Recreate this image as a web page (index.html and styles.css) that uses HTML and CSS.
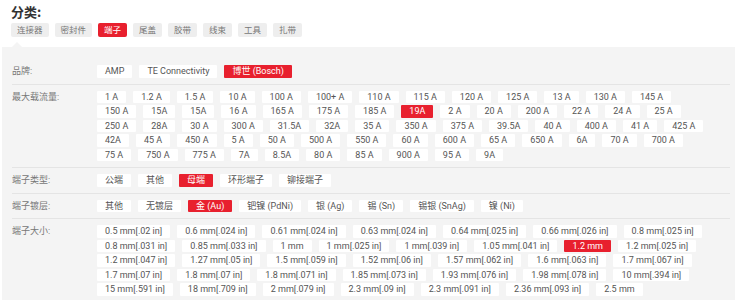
FILE: index.html
```html
<!DOCTYPE html>
<html>
<head>
    <meta charset="UTF-8">
    <title>分类筛选</title>
    <link rel="stylesheet" href="styles.css">
</head>
<body>
    <div class="filter">
        <h2 class="filter-title">分类:</h2>
        <div class="tabs">
            <span class="tab">连接器</span>
            <span class="tab">密封件</span>
            <span class="tab active">端子</span>
            <span class="tab">尾盖</span>
            <span class="tab">胶带</span>
            <span class="tab">线束</span>
            <span class="tab">工具</span>
            <span class="tab">扎带</span>
        </div>

        <div class="panel">
            <div class="row">
                <div class="label">品牌:</div>
                <div class="options">
                    <span class="opt">AMP</span>
                    <span class="opt">TE Connectivity</span>
                    <span class="opt active">博世 (Bosch)</span>
                </div>
            </div>

            <div class="row">
                <div class="label">最大载流量:</div>
                <div class="options">
                    <span class="opt">1 A</span>
                    <span class="opt">1.2 A</span>
                    <span class="opt">1.5 A</span>
                    <span class="opt">10 A</span>
                    <span class="opt">100 A</span>
                    <span class="opt">100+ A</span>
                    <span class="opt">110 A</span>
                    <span class="opt">115 A</span>
                    <span class="opt">120 A</span>
                    <span class="opt">125 A</span>
                    <span class="opt">13 A</span>
                    <span class="opt">130 A</span>
                    <span class="opt">145 A</span>
                    <span class="opt">150 A</span>
                    <span class="opt">15A</span>
                    <span class="opt">15A</span>
                    <span class="opt">16 A</span>
                    <span class="opt">165 A</span>
                    <span class="opt">175 A</span>
                    <span class="opt">185 A</span>
                    <span class="opt active">19A</span>
                    <span class="opt">2 A</span>
                    <span class="opt">20 A</span>
                    <span class="opt">200 A</span>
                    <span class="opt">22 A</span>
                    <span class="opt">24 A</span>
                    <span class="opt">25 A</span>
                    <span class="opt">250 A</span>
                    <span class="opt">28A</span>
                    <span class="opt">30 A</span>
                    <span class="opt">300 A</span>
                    <span class="opt">31.5A</span>
                    <span class="opt">32A</span>
                    <span class="opt">35 A</span>
                    <span class="opt">350 A</span>
                    <span class="opt">375 A</span>
                    <span class="opt">39.5A</span>
                    <span class="opt">40 A</span>
                    <span class="opt">400 A</span>
                    <span class="opt">41 A</span>
                    <span class="opt">425 A</span>
                    <span class="opt">42A</span>
                    <span class="opt">45 A</span>
                    <span class="opt">450 A</span>
                    <span class="opt">5 A</span>
                    <span class="opt">50 A</span>
                    <span class="opt">500 A</span>
                    <span class="opt">550 A</span>
                    <span class="opt">60 A</span>
                    <span class="opt">600 A</span>
                    <span class="opt">65 A</span>
                    <span class="opt">650 A</span>
                    <span class="opt">6A</span>
                    <span class="opt">70 A</span>
                    <span class="opt">700 A</span>
                    <span class="opt">75 A</span>
                    <span class="opt">750 A</span>
                    <span class="opt">775 A</span>
                    <span class="opt">7A</span>
                    <span class="opt">8.5A</span>
                    <span class="opt">80 A</span>
                    <span class="opt">85 A</span>
                    <span class="opt">900 A</span>
                    <span class="opt">95 A</span>
                    <span class="opt">9A</span>
                </div>
            </div>

            <div class="row">
                <div class="label">端子类型:</div>
                <div class="options">
                    <span class="opt">公端</span>
                    <span class="opt">其他</span>
                    <span class="opt active">母端</span>
                    <span class="opt">环形端子</span>
                    <span class="opt">铆接端子</span>
                </div>
            </div>

            <div class="row">
                <div class="label">端子镀层:</div>
                <div class="options">
                    <span class="opt">其他</span>
                    <span class="opt">无镀层</span>
                    <span class="opt active">金 (Au)</span>
                    <span class="opt">钯镍 (PdNi)</span>
                    <span class="opt">银 (Ag)</span>
                    <span class="opt">锡 (Sn)</span>
                    <span class="opt">锡银 (SnAg)</span>
                    <span class="opt">镍 (Ni)</span>
                </div>
            </div>

            <div class="row">
                <div class="label">端子大小:</div>
                <div class="options">
                    <span class="opt">0.5 mm[.02 in]</span>
                    <span class="opt">0.6 mm[.024 in]</span>
                    <span class="opt">0.61 mm[.024 in]</span>
                    <span class="opt">0.63 mm[.024 in]</span>
                    <span class="opt">0.64 mm[.025 in]</span>
                    <span class="opt">0.66 mm[.026 in]</span>
                    <span class="opt">0.8 mm[.025 in]</span>
                    <span class="opt">0.8 mm[.031 in]</span>
                    <span class="opt">0.85 mm[.033 in]</span>
                    <span class="opt">1 mm</span>
                    <span class="opt">1 mm[.025 in]</span>
                    <span class="opt">1 mm[.039 in]</span>
                    <span class="opt">1.05 mm[.041 in]</span>
                    <span class="opt active">1.2 mm</span>
                    <span class="opt">1.2 mm[.025 in]</span>
                    <span class="opt">1.2 mm[.047 in]</span>
                    <span class="opt">1.27 mm[.05 in]</span>
                    <span class="opt">1.5 mm[.059 in]</span>
                    <span class="opt">1.52 mm[.06 in]</span>
                    <span class="opt">1.57 mm[.062 in]</span>
                    <span class="opt">1.6 mm[.063 in]</span>
                    <span class="opt">1.7 mm[.067 in]</span>
                    <span class="opt">1.7 mm[.07 in]</span>
                    <span class="opt">1.8 mm[.07 in]</span>
                    <span class="opt">1.8 mm[.071 in]</span>
                    <span class="opt">1.85 mm[.073 in]</span>
                    <span class="opt">1.93 mm[.076 in]</span>
                    <span class="opt">1.98 mm[.078 in]</span>
                    <span class="opt">10 mm[.394 in]</span>
                    <span class="opt">15 mm[.591 in]</span>
                    <span class="opt">18 mm[.709 in]</span>
                    <span class="opt">2 mm[.079 in]</span>
                    <span class="opt">2.3 mm[.09 in]</span>
                    <span class="opt">2.3 mm[.091 in]</span>
                    <span class="opt">2.36 mm[.093 in]</span>
                    <span class="opt">2.5 mm</span>
                </div>
            </div>
        </div>
    </div>
</body>
</html>
```

FILE: styles.css
```css
body {
    margin: 0;
    font-family: Roboto, "Noto Sans CJK SC", sans-serif;
    background-color: #ffffff;
    color: #555555;
}

.filter {
    padding-top: 4px;
}

.filter-title {
    margin: 0 0 3px 11px;
    font-family: "Noto Sans CJK SC", sans-serif;
    font-size: 13px;
    line-height: 16px;
    font-weight: bold;
    color: #333333;
}

.tabs {
    display: flex;
    gap: 6px;
    padding-left: 11px;
}

.tab {
    height: 14px;
    line-height: 14px;
    padding: 0 6px;
    font-size: 8.5px;
    color: #777777;
    background-color: #eeeeee;
    border-radius: 2px;
}

.tab.active {
    background-color: #e8202e;
    color: #ffffff;
}

/* 筛选面板 */
.panel {
    position: relative;
    width: 733px;
    margin: 10px 0 0 2px;
    padding: 12px 5px 0 10px;
    box-sizing: border-box;
    background-color: #f4f4f4;
}

.panel::before {
    content: "";
    position: absolute;
    top: -5px;
    left: 10px;
    border-left: 5px solid transparent;
    border-right: 5px solid transparent;
    border-bottom: 5px solid #f4f4f4;
}

.row {
    display: flex;
    padding: 6px 0;
    border-bottom: 1px solid #e4e4e4;
}

.row:last-child {
    padding-bottom: 4px;
    border-bottom: none;
}

.label {
    flex: 0 0 85px;
    font-size: 9px;
    line-height: 12.5px;
    color: #777777;
}

.options {
    flex: 1;
    display: flex;
    flex-wrap: wrap;
    column-gap: 7px;
    row-gap: 2px;
    padding-right: 20px;
}

.opt {
    height: 12.5px;
    line-height: 12.5px;
    padding: 0 8px;
    font-size: 9px;
    color: #555555;
    background-color: #ffffff;
    border-radius: 1px;
    white-space: nowrap;
}

.opt.active {
    background-color: #e8202e;
    color: #ffffff;
}
```
